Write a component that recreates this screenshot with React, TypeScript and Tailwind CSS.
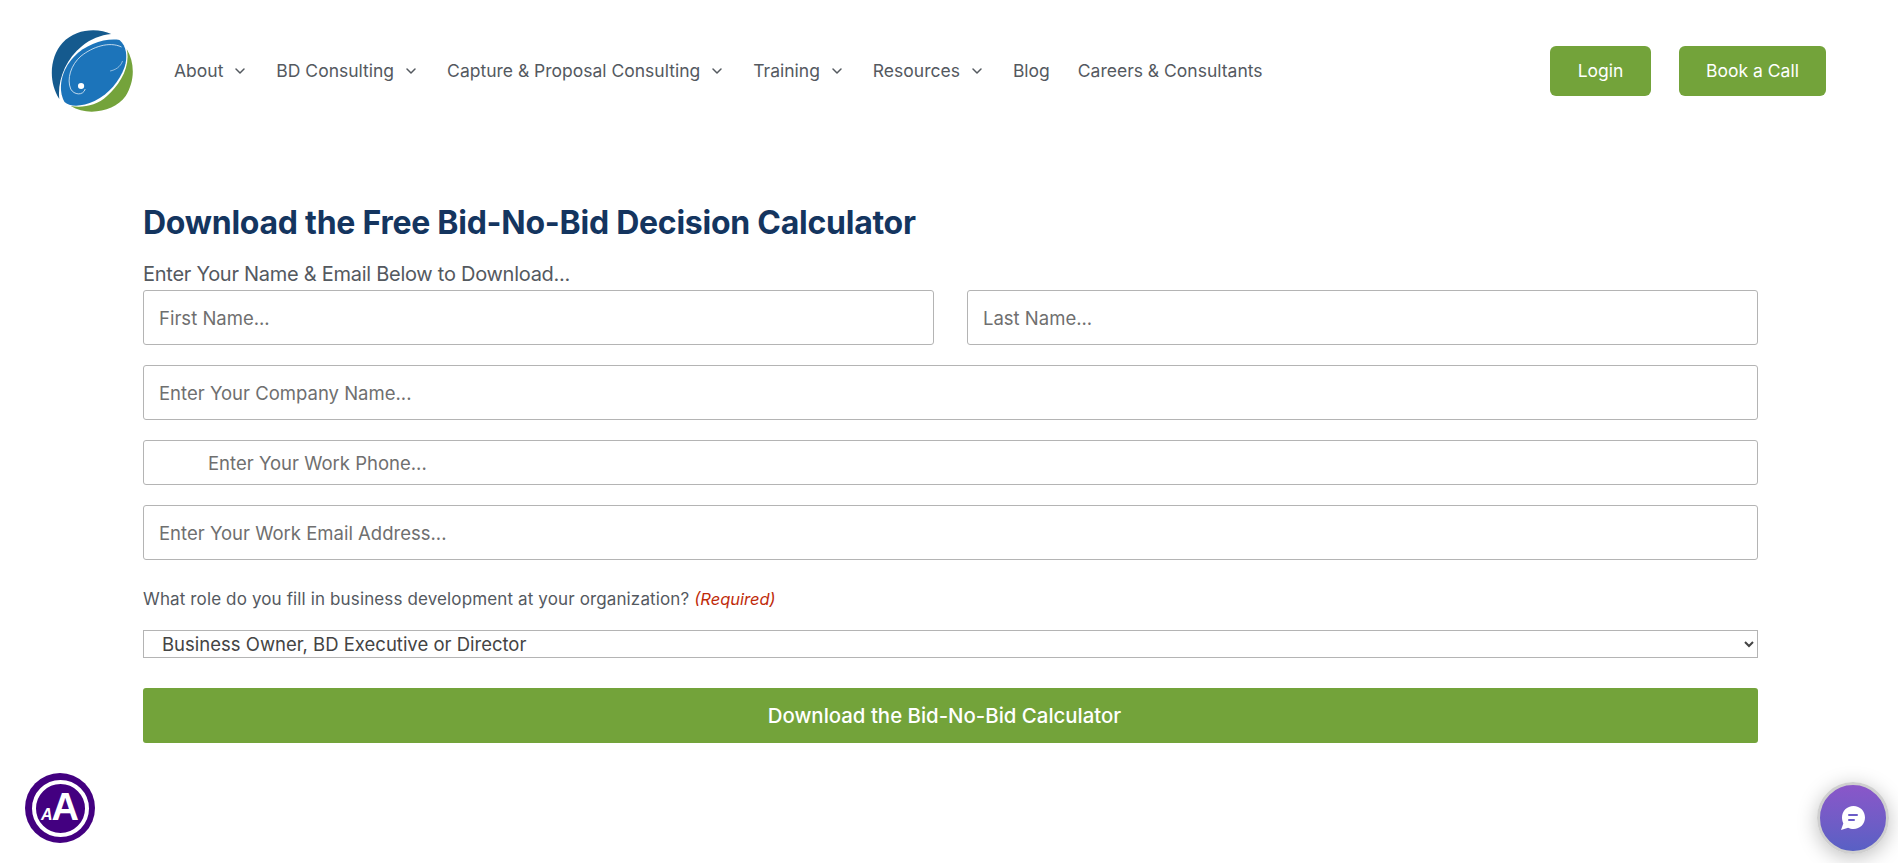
import { ChevronDown } from "lucide-react";

const navItems = [
  { label: "About", hasMenu: true },
  { label: "BD Consulting", hasMenu: true },
  { label: "Capture & Proposal Consulting", hasMenu: true },
  { label: "Training", hasMenu: true },
  { label: "Resources", hasMenu: true },
  { label: "Blog", hasMenu: false },
  { label: "Careers & Consultants", hasMenu: false },
];

function Logo() {
  return (
    <svg viewBox="0 0 81 84" preserveAspectRatio="none" className="h-[84px] w-[84px] shrink-0">
      <path d="M58 5C46-1 24-1 11 14-1 28-3 52 8 70 6 52 14 30 30 17 38 10 48 6 58 5Z" fill="#155a8e" />
      <path d="M66 11C52 9 34 15 22 28 10 41 6 60 13 73 18 78 30 78 42 72 56 65 66 52 71 38 74 28 73 17 66 11Z" fill="#1c74ba" />
      <path d="M73 20C81 34 81 52 72 67 62 82 36 88 19 77 30 79 44 77 54 67 66 56 77 38 73 20Z" fill="#74a33b" />
      <path d="M68 18C56 12 40 18 29 27 19 36 15 50 19 60 22 66 31 67 33 60" fill="none" stroke="#fff" strokeWidth="0.7" />
      <circle cx="29" cy="57" r="3" fill="#fff" />
      <path d="M57 42C62 41 67 38 69 32" fill="none" stroke="#fff" strokeWidth="0.5" />
    </svg>
  );
}

function TextField({ placeholder, className }: { placeholder: string; className?: string }) {
  return (
    <input
      type="text"
      placeholder={placeholder}
      className={`w-full rounded-[3px] border border-[#b4b4b4] bg-white text-[18.5px] text-[#444] outline-none placeholder:text-[#6f6f6f] ${className ?? "h-[55px] px-[15px]"}`}
    />
  );
}

export default function App() {
  return (
    <div className="relative h-[863px] overflow-hidden bg-white font-['Inter',sans-serif] text-[#54595f]">
      <header className="flex h-[142px] items-center pl-[51px] pr-[72px]">
        <Logo />
        <nav className="ml-[39px] flex items-center gap-[28px]">
          {navItems.map((item) => (
            <a key={item.label} href="#" className="flex items-center gap-[9px] text-[17.5px] text-[#54595f]">
              {item.label}
              {item.hasMenu ? <ChevronDown className="h-4 w-4" strokeWidth={2.25} /> : null}
            </a>
          ))}
        </nav>
        <div className="ml-auto flex items-center gap-[28px]">
          <button type="button" className="h-[50px] w-[101px] rounded-[6px] bg-[#73a33a] text-[17.5px] text-white">
            Login
          </button>
          <button type="button" className="h-[50px] w-[147px] rounded-[6px] bg-[#73a33a] text-[17.5px] text-white">
            Book a Call
          </button>
        </div>
      </header>

      <main className="pt-[58px] pr-[140px] pl-[143px]">
        <h1 className="text-[32px] leading-[46px] font-bold tracking-[-0.25px] text-[#14355f]">
          Download the Free Bid-No-Bid Decision Calculator
        </h1>
        <form>
          <p className="mt-[13px] text-[20px] leading-[31px] tracking-[-0.27px]">Enter Your Name &amp; Email Below to Download...</p>
          <div className="flex flex-col gap-[20px]">
            <div className="flex gap-[33px]">
              <TextField placeholder="First Name..." />
              <TextField placeholder="Last Name..." />
            </div>
            <TextField placeholder="Enter Your Company Name..." />
            <TextField placeholder="Enter Your Work Phone..." className="h-[45px] pr-[15px] pl-[64px]" />
            <TextField placeholder="Enter Your Work Email Address..." />
          </div>
          <p className="mt-[28px] text-[17px] leading-[22px] tracking-[0.13px]">
            What role do you fill in business development at your organization?{" "}
            <span className="text-[16.5px] tracking-normal text-[#c02b0a] italic">(Required)</span>
          </p>
          <select className="mt-[20px] block h-[28px] w-full border border-[#b4b4b4] bg-white pl-[14px] text-[18.5px] leading-[25px] text-[#444] outline-none">
            <option>Business Owner, BD Executive or Director</option>
          </select>
          <button type="submit" className="mt-[30px] h-[55px] w-full rounded-[3px] bg-[#73a33a] pr-[12px] pt-[2px] text-[20.4px] font-medium text-white">
            Download the Bid-No-Bid Calculator
          </button>
        </form>
      </main>

      {/* accessibility widget */}
      <div className="absolute bottom-[20px] left-[25px] flex h-[70px] w-[70px] items-center justify-center rounded-full bg-[#430080]">
        <div className="flex h-[57px] w-[57px] items-end justify-center rounded-full border-[4px] border-white pb-[12px] font-['Liberation_Sans',sans-serif] font-bold text-white">
          <span className="text-[16px] leading-[12px] italic">A</span>
          <span className="-ml-[1px] text-[38px] leading-[27px]">A</span>
        </div>
      </div>

      {/* chat bubble */}
      <div className="absolute right-[9px] bottom-[9px] flex h-[72px] w-[72px] items-center justify-center rounded-full border-[3px] border-[#cfcfcf] bg-gradient-to-b from-[#8a56c9] to-[#5860c4] shadow-[0_4px_20px_rgba(0,0,0,0.25)]">
        <svg viewBox="0 0 26 26" className="h-[26px] w-[26px]">
          <path d="M13.500 1C20 1 25 6 25 12.500S20 24 13.500 24c-2 0-3.800-.5-5.400-1.300L1 25 3.300 18.400C2.500 16.600 2 14.600 2 12.500 2 6 7 1 13.500 1Z" fill="#fff" />
          <rect x="8" y="9" width="10" height="2" rx="1" fill="#6b5cc8" />
          <rect x="8" y="14" width="7" height="2" rx="1" fill="#6b5cc8" />
        </svg>
      </div>
    </div>
  );
}
